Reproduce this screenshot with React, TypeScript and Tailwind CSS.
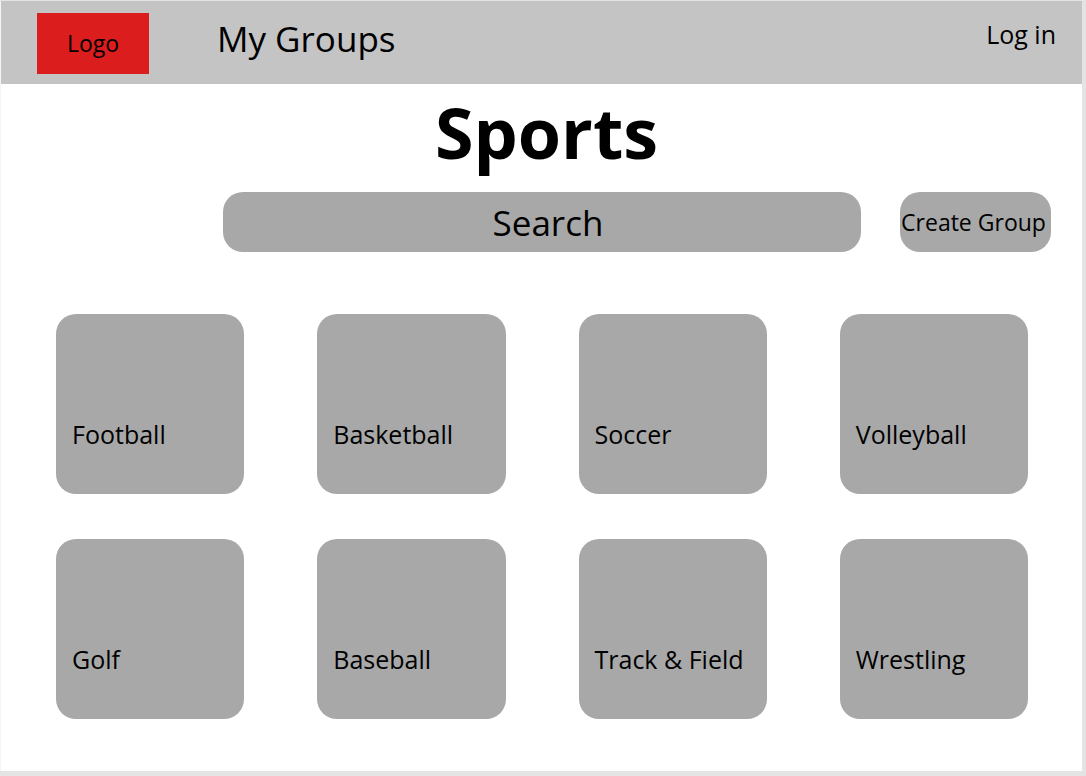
const sports = ["Football", "Basketball", "Soccer", "Volleyball", "Golf", "Baseball", "Track & Field", "Wrestling"];

export default function App() {
  return (
    <div className="flex min-h-screen flex-col bg-[#e4e4e4] pt-px pr-1 pb-[5px] font-['Open_Sans',sans-serif] text-black">
      <div className="flex flex-1 flex-col border-l border-[#f5f5f5] bg-white">
        <header className="flex h-[83px] items-start bg-[#c4c4c4] pr-[26px] pl-9">
          <a href="#" className="mt-3 flex h-[61px] w-28 items-center justify-center bg-[#db1d1d] text-[23px]">Logo</a>
          <nav className="ml-[68px] pt-3">
            <a href="#groups" className="text-[35px] leading-[52px]">My Groups</a>
          </nav>
          <a href="#login" className="mt-[15px] ml-auto text-[25px] leading-9">Log in</a>
        </header>
        <main>
          <h1 className="pt-1.5 pl-2.5 text-center text-[70px] leading-[84px] font-bold">Sports</h1>
          <div className="mt-[18px] flex items-center gap-[39px] pr-[31px] pl-[222px]">
            <input type="text" aria-label="Search groups" placeholder="Search" className="h-[60px] min-w-0 flex-1 rounded-[20px] bg-[#a8a8a8] pr-2 pl-5 text-center text-[35px] placeholder:text-black placeholder:opacity-100" />
            <button type="button" className="h-[60px] w-[151px] rounded-[20px] bg-[#a8a8a8] pr-1 text-[23px] whitespace-nowrap">Create Group</button>
          </div>
          <ul className="mt-[62px] grid grid-cols-4 gap-x-[73px] gap-y-[45px] pr-[54px] pl-[55px]">
            {sports.map((sport) => (
              <li key={sport}>
                <a href="#sport" className="flex h-[180px] items-end rounded-[20px] bg-[#a8a8a8] px-4 pb-[42px] text-[25px] leading-9 whitespace-nowrap">{sport}</a>
              </li>
            ))}
          </ul>
        </main>
      </div>
    </div>
  );
}
